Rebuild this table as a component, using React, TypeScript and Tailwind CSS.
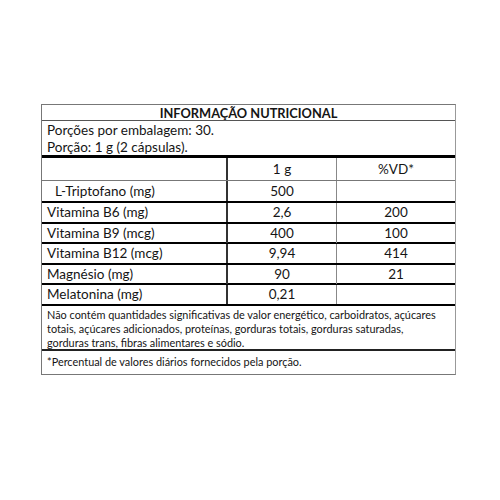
const rows = [
  { name: "Vitamina B6 (mg)", qty: "2,6", vd: "200" },
  { name: "Vitamina B9 (mcg)", qty: "400", vd: "100" },
  { name: "Vitamina B12 (mcg)", qty: "9,94", vd: "414" },
  { name: "Magnésio (mg)", qty: "90", vd: "21" },
  { name: "Melatonina (mg)", qty: "0,21", vd: "" },
];

export default function App() {
  return (
    <div className="w-[500px] h-[500px] bg-white pt-[104px] pl-[41px] text-[#151515]" style={{ fontFamily: "Lato, 'Open Sans', sans-serif" }}>
      <div className="w-[415px] border border-[#777] border-r-[#999]">
        {/* Title */}
        <div className="h-[16px] border-b border-[#555] text-center text-[12.8px] leading-[16px] font-bold">
          INFORMAÇÃO NUTRICIONAL
        </div>

        {/* Serving info */}
        <div className="h-[37px] px-[5px] pt-[1px] text-[13.5px] leading-[17px] border-b-[3px] border-black">
          <div>Porções por embalagem: 30.</div>
          <div>Porção: 1 g (2 cápsulas).</div>
        </div>

        {/* Header row */}
        <div className="grid grid-cols-[186px_109px_1fr] h-[23px] border-b border-[#777] text-[13.5px] leading-[22px]">
          <div className="border-r-2 border-[#333]"></div>
          <div className="border-r border-[#888] text-center">1 g</div>
          <div className="text-center">%VD*</div>
        </div>

        <div className="grid grid-cols-[186px_109px_1fr] h-[22px] border-b-2 border-black text-[13.5px] leading-[20px]">
          <div className="border-r-2 border-[#333] pl-[13px]">L-Triptofano (mg)</div>
          <div className="border-r border-[#888] text-center">500</div>
          <div className="text-center"></div>
        </div>

        {rows.map((r) => (
          <div key={r.name} className="grid grid-cols-[186px_109px_1fr] h-[20.6px] border-b-2 border-black text-[13.5px] leading-[19px]">
            <div className="border-r-2 border-[#333] pl-[5px]">{r.name}</div>
            <div className="border-r border-[#888] text-center">{r.qty}</div>
            <div className="text-center">{r.vd}</div>
          </div>
        ))}

        {/* Note */}
        <div className="h-[45px] pl-[5px] pr-[14px] pt-[2px] text-[10.9px] leading-[14px] border-b-2 border-[#222]">
          Não contém quantidades significativas de valor energético, carboidratos, açúcares totais, açúcares adicionados, proteínas, gorduras totais, gorduras saturadas, gorduras trans, fibras alimentares e sódio.
        </div>
        <div className="h-[23px] px-[5px] text-[10.9px] leading-[22px]">
          *Percentual de valores diários fornecidos pela porção.
        </div>
      </div>
    </div>
  );
}
